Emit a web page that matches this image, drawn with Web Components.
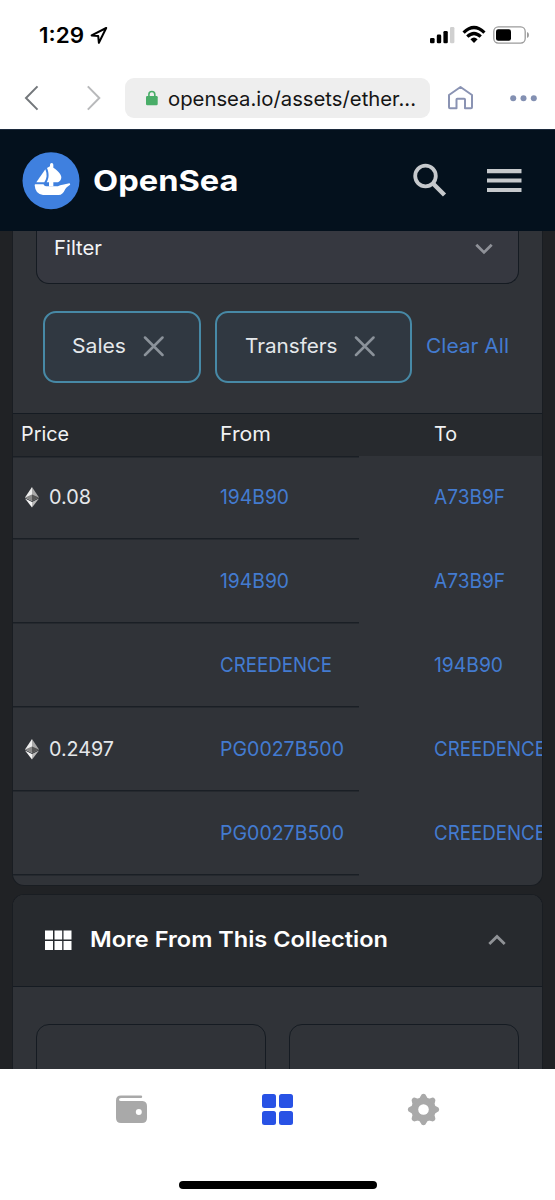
<!DOCTYPE html>
<html lang="en"><head><meta charset="utf-8"><title>OpenSea</title>
<style>html,body{margin:0;background:#202225}body{width:555px;height:1200px;overflow:hidden;font-family:Inter,"Noto Sans",sans-serif}</style></head>
<body><phone-app></phone-app>
<script>
const define=(name,html,after)=>customElements.define(name,class extends HTMLElement{
  connectedCallback(){
    if(this.shadowRoot)return;
    const t=document.createElement('template');
    t.innerHTML='<style>*{box-sizing:border-box}svg{display:block}</style>'+html;
    this.attachShadow({mode:'open'}).append(t.content.cloneNode(true));
    if(after)after.call(this,this.shadowRoot);
  }
});

/* One line of text, widened or tightened so that it fills the width in "w". */
define('ui-text','<style>:host{display:block;white-space:nowrap;flex:none;line-height:30px}span{display:inline-block;transform-origin:0 50%}</style><span><slot></slot></span>',function(root){
  const w=+this.getAttribute('w'),s=+this.getAttribute('size')||20;
  this.style.fontSize=s+'px';
  this.style.fontWeight=this.getAttribute('weight')||400;
  const sp=root.querySelector('span');
  if(w){
    this.style.width=w+'px';
    sp.style.transform='scaleX('+w/sp.getBoundingClientRect().width+')';
  }
});

define('status-bar',`<style>
:host{display:flex;height:68px;padding:0 25px 0 39px;background:#fff;color:#000}
ui-text{margin-top:20px}.arrow{margin:26px auto 0 6px}.bars{margin-top:26px}.wifi{margin:25px 0 0 7px}.bat{margin:26px 0 0 7px}</style>
<ui-text w="45" size="21.5" weight="600">1:29</ui-text>
<svg class="arrow" width="18" height="19"><path d="M16.2 2 L1.6 9.4 L8.2 10 L8.9 16.8 Z" fill="none" stroke="#000" stroke-width="2" stroke-linejoin="round"/></svg>
<svg class="bars" width="25" height="18"><rect x="0" y="12" width="4.6" height="5.2" rx="1.3"/><rect x="6.8" y="8.6" width="4.4" height="8.6" rx="1.3"/><rect x="13.4" y="5" width="4.4" height="12.2" rx="1.3"/><rect x="20" y="1" width="4.4" height="16.2" rx="1.3" fill="#d0d0d0"/></svg>
<svg class="wifi" width="24" height="19" fill="none" stroke="#000" stroke-width="3.3"><path d="M1.6 7.6 Q12 -2.5 22.4 7.6"/><path d="M5.3 11.6 Q12 5.2 18.7 11.6"/><path d="M8.4 14.2 Q12 11 15.6 14.2 L12 18 Z" fill="#000" stroke="none"/></svg>
<svg class="bat" width="37" height="18"><rect x=".8" y=".9" width="31.4" height="16.2" rx="4.5" fill="none" stroke="#9b9b9b" stroke-width="1.3"/><rect x="3" y="3.2" width="15" height="11.6" rx="2.2"/><path d="M34 6 q2 .6 2 3 t-2 3Z" fill="#9b9b9b"/></svg>`);

define('browser-bar',`<style>
:host{display:flex;height:61px;padding:10px 17px 0 24px;background:#fff}
.b,.f{margin-top:7px}.f{margin-left:47px}
.pill{display:flex;margin-left:24.500px;width:305px;height:40px;border-radius:9px;background:#eee;padding:5px 0 0 21px;color:#151515}
.pill svg{margin-top:7px}.pill ui-text{margin:1px 0 0 10px}.home{margin:7px 0 0 17.500px}.dots{margin:16px 0 0 36px}</style>
<svg class="b" width="15" height="26" fill="none" stroke="#73777b" stroke-width="2"><path d="M13.5 1.4 L2 13 L13.5 24.6"/></svg>
<svg class="f" width="15" height="26" fill="none" stroke="#b8b9bb" stroke-width="2"><path d="M1.8 1.4 L13.3 13 L1.8 24.6"/></svg>
<div class="pill"><svg width="12" height="16"><rect x="0" y="6" width="11.7" height="9.2" rx="1.2" fill="#49ad68"/><path d="M2.9 7 V4.4 a2.95 2.95 0 0 1 5.9 0 V7" fill="none" stroke="#49ad68" stroke-width="1.6"/></svg>
<ui-text w="248" size="20.2">opensea.io/assets/ether...</ui-text></div>
<svg class="home" width="27" height="26" fill="none" stroke="#8a93b3" stroke-width="2" stroke-linejoin="round"><path d="M2 10 L13.5 2 L25 10 V22.3 Q25 23.3 24 23.3 H18 V14.5 Q18 13.7 17.2 13.7 H10.3 Q9.5 13.7 9.5 14.5 V23.3 H3 Q2 23.3 2 22.3Z"/></svg>
<svg class="dots" width="28" height="9" fill="#8390b2"><circle cx="3.2" cy="4.3" r="3"/><circle cx="13.5" cy="4.3" r="3"/><circle cx="23.8" cy="4.3" r="3"/></svg>`);

define('site-header',`<style>
:host{display:flex;height:102px;background:#04111d;color:#fff;padding:0 33px 0 21px;align-items:center;border-top:1px solid #1c2a3c}
ui-text{margin:0 auto 0 12.500px;line-height:40px}.m{margin:0 0 0 39.500px}</style>
<svg width="59" height="59" viewBox="9 9 177 177"><circle cx="99" cy="98" r="85.5" fill="#3f80df"/><g fill="#fff"><path d="M55 103 L82 64 C88 79 87 91 79 103Z"/><path d="M87 60 L96 55 V50 a5 5 0 0 1 10 0 V59 C119 67 130 79 130 88 C130 96 125 100 120 103 H86 C93 90 94 77 87 60Z"/><path d="M93 100 H106 V115 H93Z"/><path d="M52 109 H76 C79 111 78 115 85 115 H114 C123 115 127 110 134 110 L154 105.5 Q157 105.5 156.500 110 C151 115 145 116 142 123 Q134 141 122 141 H75 Q52 139 50 112 Q50 109 52 109Z"/></g></svg>
<ui-text w="145.500" size="29" weight="700">OpenSea</ui-text>
<svg width="35" height="35" fill="none" stroke="#c6c9cc" stroke-width="3.800"><circle cx="13.5" cy="13" r="10.3"/><path d="M21 20.500 L32.5 32" stroke-width="4.400"/></svg>
<svg class="m" width="36" height="25" fill="#c6c9cc"><path d="M1 1 h34.500 v4.200 H1Z M1 10.400 h34.500 v4.200 H1Z M1 19.900 h34.500 v4.200 H1Z"/></svg>`);

define('filter-select',`<style>
:host{display:flex;margin:0 23px;height:52.500px;border:1.5px solid #151b22;border-top:0;border-radius:0 0 13px 13px;background:#363840;color:#f4f4f6;padding:2px 25px 0 17px;justify-content:space-between}
svg{margin-top:10px}</style><ui-text w="48"><slot></slot></ui-text>
<svg width="18" height="12" fill="none" stroke="#8f9198" stroke-width="2.800"><path d="M1.3 1.8 L9 9.400 L16.700 1.8"/></svg>`);

define('filter-chip',`<style>
:host{display:flex;height:71.500px;flex:none;border:2px solid #4789a6;border-radius:13px;background:#303841;color:#e5e8eb;padding:18px 0 0 27.500px}
svg{margin:5px 0 0 17px}</style><slot></slot>
<svg width="22" height="22" stroke="#8b929a" stroke-width="2.5" stroke-linecap="round"><path d="M2 1.500 L19.500 19 M19.500 1.500 L2 19"/></svg>`);

define('activity-row',`<style>
:host{display:grid;grid-template-columns:207px 214px 125px;height:84px;padding-top:26px;color:#e5e8eb;background:linear-gradient(#1a1f25,#1a1f25) 0 100%/346px 1.5px no-repeat}
.p{display:flex;padding-left:11px}.p svg{margin:5px 10px 0 1px}.l{color:#437bd0}
</style><div class="p"></div><ui-text class="l a"></ui-text><ui-text class="l c"></ui-text>`,function(root){
  const put=(el,t,w)=>{const n=document.createElement('ui-text');n.className=el.className;n.setAttribute('w',w);n.textContent=t;el.replaceWith(n)};
  const [f,fw]=this.getAttribute('from').split('|'),[o,ow]=this.getAttribute('to').split('|');
  put(root.querySelector('.a'),f,fw);put(root.querySelector('.c'),o,ow);
  if(this.hasAttribute('price')){
    const [p,pw]=this.getAttribute('price').split('|');
    root.querySelector('.p').innerHTML='<svg width="14" height="21"><path d="M7 0 L0 10.500 L7 14Z" fill="#ededed"/><path d="M7 0 L14 10.500 L7 14Z" fill="#a9a9a9"/><path d="M0 10.500 L7 7.5 V14Z" fill="#888"/><path d="M14 10.500 L7 7.500 V14Z" fill="#555"/><path d="M0 11.500 L7 15 V20.500Z" fill="#f4f4f4"/><path d="M14 11.500 L7 15 V20.500Z" fill="#b8b8b8"/></svg><ui-text w="'+pw+'">'+p+'</ui-text>';
  }
});

define('activity-panel',`<style>
:host{display:block;margin:0 12px;height:655px;border:1px solid #191d22;border-top:0;border-radius:0 0 12px 12px;background:#303338;overflow:hidden}
.chips{display:flex;margin:27.500px 0 0 29.500px}.s{width:158px}.t{width:197px;margin-left:14.500px}.clear{color:#437bd0;margin:20px 0 0 14px}
.head{display:grid;grid-template-columns:199px 214px 108px;margin-top:30px;height:43px;padding:5px 0 0 8px;border-top:1.5px solid #151b22;background:#272a2e;color:#f1f2f3;width:529px}
.rows{width:529px;overflow:hidden;background:linear-gradient(#1a1f25,#1a1f25) 0 0/346px 1.5px no-repeat}
</style><filter-select>Filter</filter-select>
<div class="chips"><filter-chip class="s"><ui-text w="54">Sales</ui-text></filter-chip><filter-chip class="t"><ui-text w="92.5">Transfers</ui-text></filter-chip><ui-text class="clear" w="83">Clear All</ui-text></div>
<div class="head"><ui-text w="48">Price</ui-text><ui-text w="51">From</ui-text><ui-text w="23">To</ui-text></div>
<div class="rows"><activity-row price="0.08|42" from="194B90|69" to="A73B9F|71"></activity-row><activity-row from="194B90|69" to="A73B9F|71"></activity-row><activity-row from="CREEDENCE|112" to="194B90|69"></activity-row><activity-row price="0.2497|65" from="PG0027B500|124" to="CREEDENCE|112"></activity-row><activity-row from="PG0027B500|124" to="CREEDENCE|112"></activity-row></div>`);

define('collection-panel',`<style>
:host{display:block;margin:8px 12px 0;height:175px;border:1px solid #191d22;border-bottom:0;border-radius:12px 12px 0 0;background:#303338;overflow:hidden}
.h{display:flex;height:92px;padding:29px 36px 0 32px;border-bottom:1.500px solid #151b22;background:#272a2e;color:#fff}
.i{margin-top:6px}ui-text{margin:0 auto 0 18px}.u{margin-top:10px}
.g{display:grid;grid-template-columns:1fr 1fr;gap:23px;padding:37px 23px 0}.g div{height:80px;border:1.5px solid #151b22;border-radius:13px}
</style><div class="h"><svg class="i" width="27" height="21" fill="#fff"><path d="M0 .5h8v9H0Z M9.500 .5h7.700v9H9.500Z M18.500 .5h8v9h-8Z M0 11h8v9H0Z M9.500 11h7.700v9H9.500Z M18.500 11h8v9h-8Z"/></svg>
<ui-text w="298" size="21.5" weight="600">More From This Collection</ui-text>
<svg class="u" width="18" height="12" fill="none" stroke="#8f9296" stroke-width="2.800"><path d="M1.300 10 L9 2.400 L16.700 10"/></svg></div><div class="g"><div></div><div></div></div>`);

define('tab-bar',`<style>
:host{display:block;height:131px;background:#fff}
.t{display:flex;justify-content:space-between;padding:24px 115px 0;height:112px}.h{width:198px;height:7.500px;border-radius:4px;background:#000;margin-left:179px}
</style><div class="t">
<svg width="33" height="34"><path d="M6 2.500 H26 a1.200 1.200 0 0 1 0 2.400 H6 Q4 5 4 6.500 T6 8 H27.500 Q32 8.500 32 13 V25 Q32 30 27 30 H6 Q1 30 1 25 V7.500 Q1 2.500 6 2.500Z" fill="#a9a9a9"/><circle cx="23.800" cy="19" r="3" fill="#fff"/></svg>
<svg width="33" height="34" fill="#2852e5"><rect x="1" y="1" width="14" height="14" rx="2.500"/><rect x="18" y="1" width="14" height="14" rx="2.500"/><rect x="1" y="18" width="14" height="14" rx="2.500"/><rect x="18" y="18" width="14" height="14" rx="2.500"/></svg>
<svg class="gear" width="33" height="34" viewBox="-16.500 -16.500 33 34"><g fill="#a9a9a9"><circle r="12"/></g><circle r="5.300" fill="#fff"/></svg>
</div><div class="h"></div>`,function(root){
  const g=root.querySelector('.gear g');
  for(let i=0;i<8;i++){
    const p=document.createElementNS('http://www.w3.org/2000/svg','path');
    p.setAttribute('d','M-6 -10 Q-3.500 -11.500 -2.800 -13.500 Q-2 -15.700 0 -15.700 T2.800 -13.500 Q3.500 -11.500 6 -10Z');
    p.setAttribute('transform','rotate('+i*45+')');g.append(p);
  }
});

define('phone-app',`<style>:host{display:block;width:555px;height:1200px;overflow:hidden;background:#202225}</style>
<status-bar></status-bar><browser-bar></browser-bar><site-header></site-header><activity-panel></activity-panel><collection-panel></collection-panel><tab-bar></tab-bar>`);
</script></body></html>
